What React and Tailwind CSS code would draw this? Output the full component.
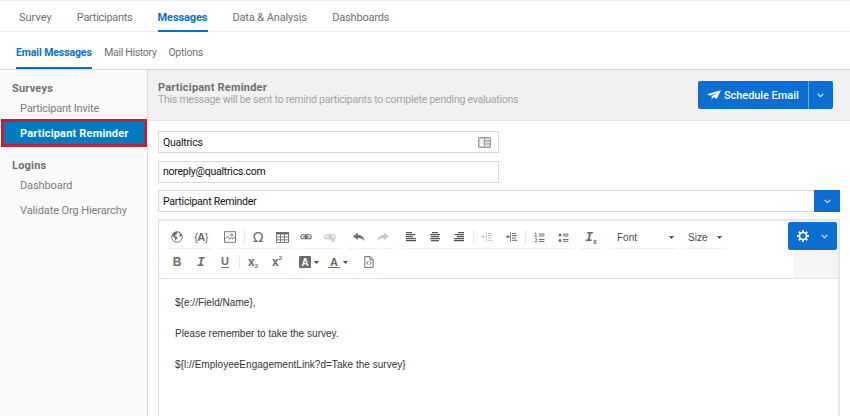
import clsx from 'clsx'

const TABS = [
  { label: 'Survey', style: 'w-[33px]' },
  { label: 'Participants', style: 'w-[56px] tracking-[-0.28px]' },
  { label: 'Messages', style: 'w-[50px] tracking-[-0.12px]', active: true },
  { label: 'Data & Analysis', style: 'w-[75px] tracking-[-0.12px]' },
  { label: 'Dashboards', style: 'w-[57px] tracking-[-0.18px]' },
]

const SUB_TABS = [
  { label: 'Email Messages', style: 'w-[76px] tracking-[-0.1px]', active: true },
  { label: 'Mail History', style: 'w-[52px] tracking-[-0.3px]' },
  { label: 'Options', style: 'w-[34px] tracking-[-0.25px]' },
]

export default function App() {
  return (
    <div className="flex h-[416px] w-[850px] flex-col overflow-hidden bg-white font-['Roboto',sans-serif] text-[11px] text-[#6f6f6f]">
      <nav className="flex h-8 shrink-0 gap-[24.8px] border-y border-[#ebebeb] pl-[19px]">
        {TABS.map(tab => (
          <div
            key={tab.label}
            className={clsx(
              'h-[31px] whitespace-nowrap pt-[9px] leading-4',
              tab.style,
              tab.active && 'border-b-2 border-[#0b6ed0] font-bold text-[#0b6ed0]',
            )}
          >
            {tab.label}
          </div>
        ))}
      </nav>

      <nav className="flex h-[38px] shrink-0 gap-[12.2px] border-b border-[#d6d6d6] pl-4 text-[10.5px]">
        {SUB_TABS.map(tab => (
          <div
            key={tab.label}
            className={clsx(
              'h-[37px] whitespace-nowrap pt-[13px] leading-4',
              tab.style,
              tab.active && 'border-b-2 border-[#0b6ed0] font-bold text-[#0b6ed0]',
            )}
          >
            {tab.label}
          </div>
        ))}
      </nav>

      <div className="flex min-h-0 flex-1">
        <Sidebar />
        <main className="flex min-w-0 flex-1 flex-col">
          <MessageHeader />
          <div className="flex flex-1 flex-col pl-[10px] pr-[10px] pt-[10px] text-[10.5px] tracking-[-0.24px] text-[#111]">
            <div className="flex h-[22px] w-[341px] items-center justify-between border border-[#d9d9d9] pl-[4px] pr-[7px]">
              <span className="pt-px">Qualtrics</span>
              <ContactCard />
            </div>
            <div className="mt-[8px] flex h-[22px] w-[341px] items-center border border-[#d9d9d9] pl-[4px]">
              noreply@qualtrics.com
            </div>
            <div className="mt-[7px] flex h-[22px] items-center justify-between border border-r-0 border-[#d9d9d9] pl-[4px]">
              <span className="pt-px">Participant Reminder</span>
              <span className="-my-px flex h-[22px] w-[26px] items-center justify-center bg-[#0b6ed0]">
                <Chevron />
              </span>
            </div>
            <Editor />
          </div>
        </main>
      </div>
    </div>
  )
}

function Sidebar() {
  return (
    <aside className="flex w-[148px] shrink-0 flex-col border-r border-[#dcdcdc] bg-[#fafafa]">
      <h2 className="mt-[11px] pl-3 font-bold leading-4 tracking-[0.2px]">Surveys</h2>
      <div className="mt-[4px] pl-5 leading-4 tracking-[-0.2px] text-[#7c7c7c]">Participant Invite</div>
      <div className="ml-px mt-[2px] flex h-[28px] w-[146px] items-center border-3 border-[#bf2232] bg-[#007ac0] pl-4 pt-[2px] font-bold tracking-[0.18px] text-white">
        Participant Reminder
      </div>
      <h2 className="mt-[11px] pl-3 font-bold leading-4 tracking-[0.2px]">Logins</h2>
      <div className="mt-[4px] pl-5 leading-4 tracking-[-0.1px] text-[#7c7c7c]">Dashboard</div>
      <div className="mt-[9px] pl-5 leading-4 tracking-[-0.1px] text-[#7c7c7c]">Validate Org Hierarchy</div>
    </aside>
  )
}

function MessageHeader() {
  return (
    <header className="flex h-[51px] shrink-0 justify-between border-b border-[#e4e4e4] bg-[#f1f1f1] pl-[10px] pr-[17px] pt-[11px]">
      <div>
        <h1 className="font-bold leading-[13px] tracking-[0.2px]">Participant Reminder</h1>
        <p className="text-[10.5px] leading-[11px] tracking-[-0.25px] text-[#a3a3a3]">
          This message will be sent to remind participants to complete pending evaluations
        </p>
      </div>
      <div className="flex h-7 w-[135px] overflow-hidden rounded-[2px] bg-[#0b6ed0] text-white">
        <div className="flex w-[111px] items-center gap-[3px] border-r border-[#73ade4] pl-[9px]">
          <svg viewBox="0 0 15 10" className="h-[10px] w-[14px] shrink-0" fill="currentColor">
            <path d="M15 0 0 4.3l3.4 1.4L11.5 2 5 6.4v3.4l2-2.3 3.6 1.5z" />
          </svg>
          <span className="whitespace-nowrap pt-[2px] font-medium tracking-[-0.06px]">Schedule Email</span>
        </div>
        <div className="flex flex-1 items-center justify-center pr-[2px]">
          <Chevron />
        </div>
      </div>
    </header>
  )
}

function Editor() {
  return (
    <section className="mt-[7px] flex min-h-0 flex-1 flex-col border-x-2 border-l border-t-2 border-[#e6e6e6] border-l-[#dedede] font-['Liberation_Sans',sans-serif] text-[10px] tracking-normal">
      <div className="flex h-[58px] shrink-0 justify-between border-b border-[#e3e3e3]">
        <div className="flex flex-col gap-[3px] pl-[6px] pt-[5px] text-[#6b6b6b]">
          <div className="flex">
            <Group className="mr-[5px]">
              <Tool><Globe /></Tool>
              <Tool><span className="text-[11px] tracking-[-0.6px]">{'{'}<b>A</b>{'}'}</span></Tool>
            </Group>
            <Group className="mr-[5px]">
              <Tool><Picture /></Tool>
              <Separator />
              <Tool><span className="font-['DejaVu_Sans',sans-serif] text-[14px]">Ω</span></Tool>
              <Tool><Table /></Tool>
              <Tool><Link /></Tool>
              <Tool muted><Link broken /></Tool>
            </Group>
            <Group className="mr-[4px]">
              <Tool><Arrow /></Tool>
              <Tool muted><Arrow flip /></Tool>
            </Group>
            <Group className="mr-[4px]">
              <Tool><Align rows={[[0, 6], [0, 9], [0, 7], [0, 10], [0, 10]]} /></Tool>
              <Tool><Align rows={[[2, 6], [0, 10], [1, 8], [0, 10], [1, 8]]} /></Tool>
              <Tool><Align rows={[[4, 6], [1, 9], [3, 7], [0, 10], [0, 10]]} /></Tool>
              <Separator />
              <Tool muted><Indent outdent /></Tool>
              <Tool><Indent /></Tool>
              <Separator />
              <Tool><NumberedList /></Tool>
              <Tool><BulletList /></Tool>
            </Group>
            <Group className="mr-[6px]">
              <Tool>
                <span className="pt-px font-['Liberation_Mono',monospace] text-[13px] font-bold italic leading-3">I</span>
                <span className="mt-[8px] text-[7px] font-bold leading-[7px]">x</span>
              </Tool>
            </Group>
            <Group className="mr-[3px] w-[69px] items-center justify-between pl-[8px] pr-[4px] text-[#484848]">
              Font
              <Caret />
            </Group>
            <Group className="w-[46px] items-center justify-between pl-[7px] pr-[5px] text-[#484848]">
              Size
              <Caret />
            </Group>
          </div>
          <div className="flex">
            <Group className="mr-[10px]">
              <Tool><b className="text-[12px]">B</b></Tool>
              <Tool><b className="pt-[2px] font-['Liberation_Mono',monospace] text-[13px] italic">I</b></Tool>
              <Tool><b className="border-b border-current text-[11px] leading-[11px]">U</b></Tool>
              <Separator />
              <Tool><b className="text-[12px] leading-3">x</b><b className="mt-[9px] text-[6px]">2</b></Tool>
              <Tool><b className="text-[12px] leading-3">x</b><b className="mb-[7px] text-[6px]">2</b></Tool>
            </Group>
            <Group className="mr-[5px] w-[53px] items-center">
              <b className="flex h-[12px] w-[12px] items-center justify-center rounded-[1px] bg-[#6b6b6b] text-[10px] text-white">A</b>
              <span className="ml-[3px]"><Caret /></span>
              <b className="ml-[9px] w-[12px] border-b border-current text-center text-[11px] leading-[10px]">A</b>
              <span className="ml-[3px]"><Caret /></span>
            </Group>
            <Group><Tool><Source /></Tool></Group>
          </div>
        </div>
        <div className="relative w-[45px] bg-[#f5f5f5]">
          <div className="absolute right-px top-px flex h-7 w-[49px] items-center justify-between rounded-[2px] bg-[#0b6ed0] pl-[9px] pr-[9px]">
            <Gear />
            <Chevron />
          </div>
        </div>
      </div>
      <div className="flex flex-col gap-[15px] pl-[16px] pt-[16px] leading-4 tracking-[0.03px] text-[#333]">
        <p>{'${e://Field/Name},'}</p>
        <p>Please remember to take the survey.</p>
        <p>{'${l://EmployeeEngagementLink?d=Take the survey}'}</p>
      </div>
    </section>
  )
}

function Group({ className, children }) {
  return (
    <div className={clsx('flex h-[22px] rounded-[2px] shadow-[0_1px_1px_#f1f1f1]', className)}>
      {children}
    </div>
  )
}

function Tool({ muted, children }) {
  return (
    <span className={clsx('flex w-6 items-center justify-center', muted && 'text-[#c5c5c5]')}>
      {children}
    </span>
  )
}

function Separator() {
  return <span className="mx-[1.5px] my-[4px] w-px bg-[#e6e6e6]" />
}

function Caret() {
  return (
    <svg viewBox="0 0 5 3" className="h-[3px] w-[5px]" fill="#484848">
      <path d="M0 0h5L2.5 3z" />
    </svg>
  )
}

function Chevron() {
  return (
    <svg viewBox="0 0 7 5" className="h-[5px] w-[7px]" fill="none" stroke="#d9e9f9" strokeWidth="1.2">
      <path d="m.7.8 2.8 2.8L6.3.8" />
    </svg>
  )
}

function ContactCard() {
  return (
    <svg viewBox="0 0 13 11" className="h-[11px] w-[13px]" fill="none" stroke="#999">
      <rect x=".6" y=".6" width="11.8" height="9.8" rx="1" fill="#e2e2e2" strokeWidth="1.2" />
      <path d="M6.500 1v9M7 4h5M7 7h5" />
      <circle cx="3.6" cy="3.8" r="1.2" fill="#fff" stroke="none" />
      <path d="M2 7.5h3.5" stroke="#fff" strokeWidth="2.2" />
    </svg>
  )
}

function Globe() {
  return (
    <svg viewBox="0 0 12 12" className="h-3 w-3" fill="currentColor">
      <circle cx="6" cy="6" r="5.3" fill="none" stroke="currentColor" strokeWidth=".9" />
      <path d="M1.2 4 3 1.6l3-.8.8.8-1.2.8.3 1-1.4.6-.6 1.2 2 .6.8 1.2-1.2 1-.5 2-.9-1.2-.2-2L2 5.4zM8 1.4l2 1.6.8 2-1.3.9-1.2-1.2.6-1z" />
    </svg>
  )
}

function Picture() {
  return (
    <svg viewBox="0 0 12 12" className="h-3 w-3" fill="none" stroke="currentColor" strokeWidth=".9">
      <path d="M.5.7h11v10.6H.5zM1 8l2.5-3 2.3 3.2L7.5 6.8 9 7.7l2.2-2.2" />
      <circle cx="7.8" cy="4" r="1.1" />
    </svg>
  )
}

function Table() {
  return (
    <svg viewBox="0 0 13 11" className="h-[11px] w-[13px]" fill="none" stroke="currentColor" strokeWidth=".9">
      <path d="M.5.5h12v10H.5zM.5 5h12M.5 7.8h12M4.5 2v8.5M8.5 2v8.5" />
      <path d="M0 1.2h13" strokeWidth="2.4" />
    </svg>
  )
}

function Link({ broken }) {
  return (
    <svg viewBox="0 0 12 12" className="h-3 w-3" fill="none" stroke="currentColor" strokeWidth="1.1">
      <rect x=".8" y="3.8" width="6" height="4" rx="2" />
      <rect x="5.2" y="3.8" width="6" height="4" rx="2" />
      <path d="M3 5.8h6" />
      {broken && <path d="m7 7.2 4 4M11 7.2l-4 4" />}
    </svg>
  )
}

function Arrow({ flip }) {
  return (
    <svg viewBox="0 0 12 10" className={clsx('h-[10px] w-3', flip && '-scale-x-100')} fill="currentColor">
      <path d="M0 4.3 4.8.8v2.1c3.8.1 6.3 2 6.8 6C9.7 6.5 7.5 5.9 4.8 6v2z" />
    </svg>
  )
}

function Align({ rows }) {
  return (
    <svg viewBox="0 0 10 10" className="h-[10px] w-[10px]" fill="#555">
      {rows.map(([x, width], i) => (
        <rect key={i} x={x} y={i * 2} width={width} height="1.25" />
      ))}
    </svg>
  )
}

function Indent({ outdent }) {
  return (
    <svg viewBox="0 0 12 10" className="h-[10px] w-3" fill="none" stroke="currentColor">
      <path d="M5.5 0v10" strokeWidth=".8" />
      <path d="M7 1.5h4M7 3.5h5M7 6h4M7 8.3h5M.5 4.8h4" />
      <path d={outdent ? 'M0 4.8 2.5 3v3.6z' : 'M4.8 4.8 2.3 3v3.6z'} fill="currentColor" stroke="none" />
    </svg>
  )
}

function NumberedList() {
  return (
    <svg viewBox="0 0 11 11" className="h-[11px] w-[11px]" fill="none" stroke="currentColor">
      <path d="M5 2h5.5M5 4h5.5M5 7.5h5.5M5 9.5h5.5" />
      <path d="M.7 1.2 1.8.8v3.7M.5 4.5h2.6M.6 6.8h2v1.3L.8 9.9h2.2" strokeWidth=".8" />
    </svg>
  )
}

function BulletList() {
  return (
    <svg viewBox="0 0 11 11" className="h-[11px] w-[11px]" fill="none" stroke="currentColor">
      <path d="M5 2.2h5.5M5 4h5.5M5 7.5h5.5M5 9.3h5.5" />
      <circle cx="2" cy="3.1" r="1.5" fill="currentColor" stroke="none" />
      <circle cx="2" cy="8.4" r="1.5" fill="currentColor" stroke="none" />
    </svg>
  )
}

function Source() {
  return (
    <svg viewBox="0 0 10 12" className="h-3 w-[10px]" fill="none" stroke="currentColor">
      <path d="M.8.6h5.4l3 3v7.8H.8zM6 .8v3h3" />
      <path d="M4.2 5.2 2.7 7l1.5 1.8M5.8 5.2 7.3 7 5.8 8.8" />
    </svg>
  )
}

function Gear() {
  return (
    <svg viewBox="0 0 12 12" className="h-3 w-3" fill="none" stroke="#fff">
      <circle cx="6" cy="6" r="3.5" strokeWidth="1.7" />
      <path
        d="M6 0v2M6 10v2M0 6h2M10 6h2M1.8 1.8l1.4 1.4M8.8 8.8l1.4 1.4M1.8 10.2l1.4-1.4M8.8 3.2l1.4-1.4"
        strokeWidth="2"
      />
    </svg>
  )
}
